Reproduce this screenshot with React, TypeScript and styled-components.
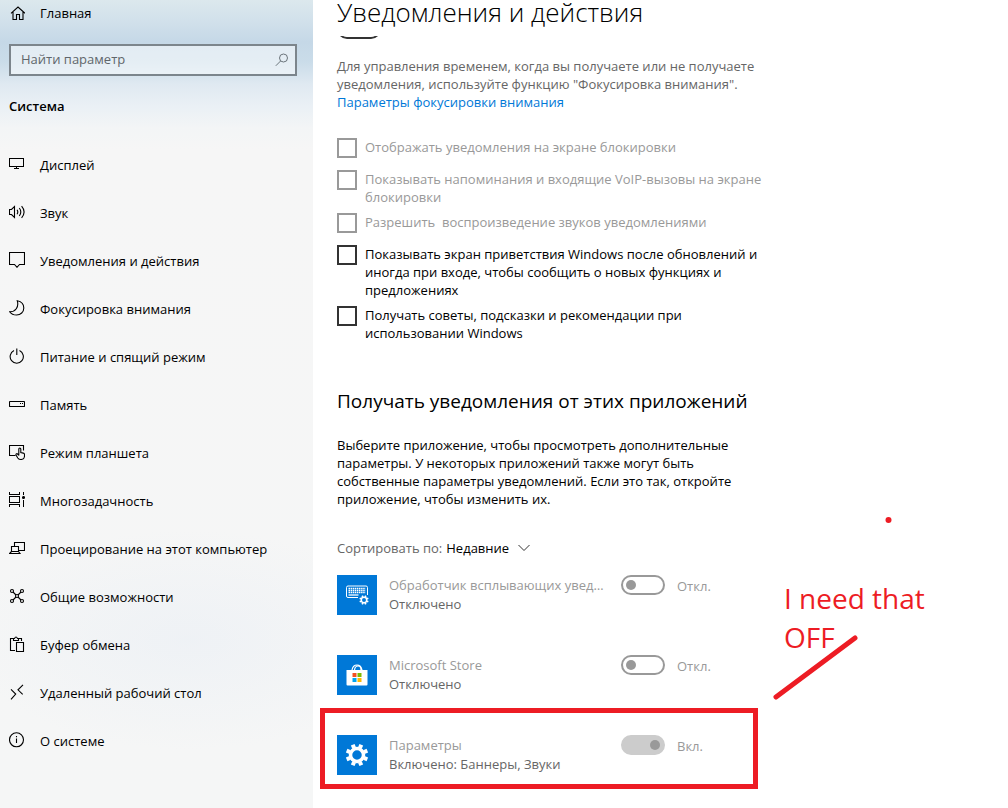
import React from 'react';
import styled, { createGlobalStyle } from 'styled-components';

const GlobalStyle = createGlobalStyle`
  *, *::before, *::after { box-sizing: border-box; }
  body {
    margin: 0;
    background: #fff;
    color: #000;
    font: 13px/18px "Open Sans", "Noto Sans", sans-serif;
  }
  h1, h2, p, ul { margin: 0; padding: 0; }
  ul { list-style: none; }
`;

const Page = styled.div`
  display: flex;
  min-height: 100vh;
`;

const Sidebar = styled.aside`
  flex: 0 0 313px;
  background:
    radial-gradient(ellipse 220px 110px at 60% 640px, rgba(228, 235, 244, 0.4), rgba(228, 235, 244, 0) 100%),
    linear-gradient(#dce8ed 0, #d2e1eb 20px, #c5d8e7 42px, #cadce9 62px, #dfe9f1 84px, #eaf0f5 106px, #f3f5f6 128px, #f6f6f6 150px, #f5f6f6 100%);
`;

const NavLink = styled.a`
  display: flex;
  align-items: center;
  gap: 15px;
  height: 48px;
  padding: 0 9px;
  color: #000;
  text-decoration: none;
  svg {
    flex: none;
    margin-bottom: 2px;
  }
`;

const HomeLink = styled(NavLink)`
  height: 26px;
`;

const SearchBox = styled.form`
  display: flex;
  align-items: center;
  height: 32px;
  margin: 18px 16px 0 9px;
  padding: 0 6px 0 10px;
  border: 2px solid #7c858c;
  background: rgba(255, 255, 255, 0.5);
`;

const SearchInput = styled.input`
  flex: 1;
  min-width: 0;
  padding: 0 0 2px;
  border: 0;
  outline: 0;
  background: transparent;
  font: inherit;
  color: #000;
  &::placeholder { color: #5f666b; opacity: 1; }
`;

const SectionTitle = styled.h2`
  padding: 0 9px;
  margin: 21px 0 26px;
  font-size: 13px;
  line-height: 18px;
  font-weight: 600;
`;

const Main = styled.main`
  position: relative;
  flex: 1;
  min-width: 0;
  padding: 0 24px;
`;

const PageTitle = styled.h1`
  font-size: 26px;
  line-height: 24px;
  font-weight: 300;
`;

const ScrollEdge = styled.div`
  display: flex;
  align-items: flex-end;
  height: 3px;
  margin-top: 12px;
  overflow: hidden;
`;

const Content = styled.div`
  max-width: 434px;
`;

const Hint = styled.p`
  margin-top: 18px;
  color: #666;
`;

const TextLink = styled.a`
  color: #0078d7;
  text-decoration: none;
`;

const Options = styled.ul`
  display: flex;
  flex-direction: column;
  gap: 7px;
  margin-top: 27px;
`;

const Option = styled.label<{ $off?: boolean }>`
  display: flex;
  align-items: flex-start;
  gap: 8px;
  min-height: 25px;
  white-space: pre-wrap;
  color: ${p => (p.$off ? '#999' : '#000')};
`;

const CheckBox = styled.input`
  appearance: none;
  flex: none;
  width: 20px;
  height: 20px;
  margin: 0;
  border: 2px solid #333;
  background: #fff;
  &:disabled { border-color: #999; }
`;

const GroupTitle = styled.h2`
  margin-top: 45px;
  font-size: 19px;
  line-height: 28px;
  font-weight: 400;
`;

const Paragraph = styled.p`
  max-width: 410px;
  margin-top: 21px;
`;

const SortRow = styled.div`
  display: flex;
  align-items: center;
  gap: 4px;
  margin: 31px 0 18px;
  color: #666;
`;

const SortSelect = styled.select`
  appearance: none;
  field-sizing: content;
  padding: 0;
  margin: 0 5px 0 0;
  border: 0;
  background: transparent;
  font: inherit;
  color: #000;
`;

const AppList = styled.ul`
  display: flex;
  flex-direction: column;
  gap: 40px;
`;

const AppRow = styled.li`
  position: relative;
  display: grid;
  grid-template-columns: 40px 220px 1fr;
  column-gap: 12px;
  height: 40px;
`;

const Tile = styled.div`
  display: grid;
  place-items: center;
  background: #0078d7;
`;

const AppText = styled.div`
  display: flex;
  flex-direction: column;
  gap: 1px;
  padding-top: 1px;
`;

const AppName = styled.div`
  overflow: hidden;
  white-space: nowrap;
  text-overflow: ellipsis;
  color: #999;
`;

const AppState = styled.div`
  color: #666;
`;

const ToggleLabel = styled.label`
  display: flex;
  align-items: flex-start;
  gap: 12px;
  color: #999;
`;

const ToggleText = styled.span`
  padding-top: 2px;
`;

const Toggle = styled.input`
  appearance: none;
  flex: none;
  width: 44px;
  height: 20px;
  margin: 0;
  padding: 3px;
  border: 2px solid #333;
  border-radius: 10px;
  display: flex;
  &::before {
    content: '';
    width: 10px;
    height: 10px;
    border-radius: 5px;
    background: #333;
  }
  &:disabled { border-color: #999; }
  &:disabled::before { background: #999; }
  &:checked { justify-content: flex-end; }
  &:checked:disabled { border-color: #ccc; background: #ccc; }
`;

const Highlight = styled.div`
  position: absolute;
  inset: -27px 13px -14px -17px;
  border: 5px solid #ed1c24;
  pointer-events: none;
`;

const Note = styled.p`
  position: absolute;
  left: 471px;
  top: 579px;
  color: #ed1c24;
  font: 28px/39px "Open Sans", sans-serif;
  white-space: pre-line;
`;

const Scribble = styled.svg`
  position: absolute;
  left: 457px;
  top: 510px;
  pointer-events: none;
`;

const icons: Record<string, React.ReactNode> = {
  home: <path d="M2 9.300 9 3l7 6.300M4 7.500v8h3.500v-5h3v5H14v-8" />,
  display: <path shapeRendering="crispEdges" d="M.5 2.500h14v8H.5zM7.500 10.500v2M5 12.500h5" />,
  sound: (
    <>
      <path d="M.5 5.500h2l3-3v11l-3-3h-2z" />
      <path d="M8 5.800q1.600 2.200 0 4.400M10.300 4q3 4 0 8M12.600 2.200q5 5.800 0 11.600" />
    </>
  ),
  message: <path d="M.5 .5h15v12h-5L8 15.300 5.500 12.500h-5z" />,
  moon: <path d="M8.300 .8c4 .8 6.500 3.500 6.500 7.200 0 4-3.200 7-7.200 7-3 0-5.500-1.200-7-3.300 5.800 .2 9.500-4.500 7.700-10.900z" />,
  power: <path d="M5 2.600a6.600 6.600 0 1 0 5.500 0M7.800 .5v6.500" />,
  storage: (
    <>
      <rect x=".5" y="5.500" width="15" height="5" rx=".5" />
      <path d="M11 7.500h1M13 7.500h1" />
    </>
  ),
  tablet: (
    <>
      <path d="M6.500 11.500h-6v-10h14v5" />
      <path d="M9.800 11.500V5q0-1 1-1t1 1v3.500l2.500 .6q1.200 .3 1.200 1.500V12q0 3.500-3.500 3.500-2.200 0-3.200-1.500L7 11q-.3-1 .6-1.300t2.200 1.800" />
    </>
  ),
  tasks: (
    <>
      <path shapeRendering="crispEdges" d="M0 2.500h11M.5 0v2.500M10.500 0v2.500M.5 4.500h10v6H.5zM0 12.500h11M.5 12.500V15M10.500 12.500V15M14.500 0v3M14.500 8v7" />
      <circle cx="14.500" cy="5.500" r="1" fill="currentColor" />
    </>
  ),
  project: <path d="M5.500 6V2.500h10v8H10M2.500 6.500h7v5h-7zM2.500 11.500l-2 2h10.500l-1.500-2" />,
  shared: (
    <>
      <circle cx="3" cy="3" r="1.500" /><circle cx="13" cy="3" r="1.500" />
      <circle cx="3" cy="13" r="1.500" /><circle cx="13" cy="13" r="1.500" />
      <circle cx="8" cy="8" r="1.500" />
      <path d="M4 4l3 3M12 4 9 7M4 12l3-3M12 12 9 9" />
    </>
  ),
  clipboard: (
    <>
      <path d="M6 14.500H1.500v-12H4M10 2.500h2.500V5M4.500 4.500v-2h1q1.500-3 3 0h1v2z" />
      <path d="M7.500 6.500h7v9h-7z" />
    </>
  ),
  remote: <path d="M2 5.300 6.700 10 2 15.300M14 .8 9 5.800l4.700 4.500" />,
  info: <><circle cx="7.500" cy="7.800" r="7" /><path d="M7.500 6.500V11M7.500 4v1.300" /></>,
};

const Icon = ({ name }: { name: string }) => (
  <svg width="16" height="16" viewBox="0 0 16 16" fill="none" stroke="currentColor" strokeWidth="1.100" aria-hidden="true">
    {icons[name]}
  </svg>
);

const Gear = ({ size, x, y }: { size: number; x?: number; y?: number }) => (
  <svg x={x} y={y} width={size} height={size} viewBox="0 0 24 24" fill="none" stroke="#fff" aria-hidden="true">
    <circle cx="12" cy="12" r="6.500" strokeWidth="3.500" />
    {[22.5, 67.5, 112.5, 157.5, 202.5, 247.5, 292.5, 337.5].map(a => (
      <path key={a} d="M12 4.500V.8" strokeWidth="4" transform={`rotate(${a} 12 12)`} />
    ))}
  </svg>
);

const KeyboardIcon = () => (
  <svg width="24" height="20" viewBox="0 0 24 20" fill="none" stroke="#fff" aria-hidden="true">
    <path d="M13 12.500H3q-1.500 0-1.500-1.500V2.500Q1.500 1 3 1h18q1.500 0 1.500 1.500V10" />
    <path d="M3.500 3.500h17M3.500 5.500h17M3.500 7.500h17" strokeWidth="1.300" strokeDasharray="1.500 .6" />
    <path d="M3.500 10h10" strokeWidth="1.300" />
    <Gear size={10} x={14} y={10} />
  </svg>
);

const StoreIcon = () => (
  <svg width="22" height="22" viewBox="0 0 22 22" aria-hidden="true">
    <path d="M6 6q1-5 5-5t5 5M8.500 6q.5-4 3.500-4t3 4" fill="none" stroke="#fff" strokeWidth="1.200" />
    <path d="M.5 6h21v14.500q0 1-1 1h-19q-1 0-1-1z" fill="#fff" />
    <path d="M6.500 9h4v4h-4z" fill="#f25022" />
    <path d="M11.500 9h4v4h-4z" fill="#7fba00" />
    <path d="M6.500 14h4v4h-4z" fill="#00a4ef" />
    <path d="M11.500 14h4v4h-4z" fill="#ffb900" />
  </svg>
);

const navItems = [
  ['display', 'Дисплей'],
  ['sound', 'Звук'],
  ['message', 'Уведомления и действия'],
  ['moon', 'Фокусировка внимания'],
  ['power', 'Питание и спящий режим'],
  ['storage', 'Память'],
  ['tablet', 'Режим планшета'],
  ['tasks', 'Многозадачность'],
  ['project', 'Проецирование на этот компьютер'],
  ['shared', 'Общие возможности'],
  ['clipboard', 'Буфер обмена'],
  ['remote', 'Удаленный рабочий стол'],
  ['info', 'О системе'],
];

const options = [
  { text: 'Отображать уведомления на экране блокировки', off: true },
  { text: 'Показывать напоминания и входящие VoIP-вызовы на экране блокировки', off: true },
  { text: 'Разрешить  воспроизведение звуков уведомлениями', off: true },
  { text: 'Показывать экран приветствия Windows после обновлений и иногда при входе, чтобы сообщить о новых функциях и предложениях' },
  { text: 'Получать советы, подсказки и рекомендации при использовании Windows' },
];

const apps = [
  { name: 'Обработчик всплывающих уведомлений', state: 'Отключено', on: false, icon: <KeyboardIcon /> },
  { name: 'Microsoft Store', state: 'Отключено', on: false, icon: <StoreIcon /> },
  { name: 'Параметры', state: 'Включено: Баннеры, Звуки', on: true, icon: <Gear size={24} /> },
];

export default function App() {
  return (
    <>
      <GlobalStyle />
      <Page>
        <Sidebar>
          <HomeLink href="#home"><Icon name="home" />Главная</HomeLink>
          <SearchBox role="search">
            <SearchInput type="text" placeholder="Найти параметр" aria-label="Найти параметр" />
            <svg width="14" height="14" viewBox="0 0 14 14" fill="none" stroke="#6b747b" aria-hidden="true">
              <circle cx="8.500" cy="5" r="4" />
              <path d="M5.600 8 .8 12.800" />
            </svg>
          </SearchBox>
          <SectionTitle>Система</SectionTitle>
          <nav>
            {navItems.map(([icon, label]) => (
              <NavLink key={icon} href={`#${icon}`}><Icon name={icon} />{label}</NavLink>
            ))}
          </nav>
        </Sidebar>
        <Main>
          <PageTitle>Уведомления и действия</PageTitle>
          <ScrollEdge>
            <Toggle type="checkbox" role="switch" aria-label="Уведомления" />
          </ScrollEdge>
          <Content>
            <Hint>
              Для управления временем, когда вы получаете или не получаете уведомления, используйте функцию "Фокусировка внимания".
              <br />
              <TextLink href="#focus">Параметры фокусировки внимания</TextLink>
            </Hint>
            <Options>
              {options.map(o => (
                <li key={o.text}>
                  <Option $off={o.off}>
                    <CheckBox type="checkbox" disabled={o.off} />
                    <span>{o.text}</span>
                  </Option>
                </li>
              ))}
            </Options>
            <GroupTitle>Получать уведомления от этих приложений</GroupTitle>
            <Paragraph>
              Выберите приложение, чтобы просмотреть дополнительные параметры. У некоторых приложений также могут быть собственные параметры уведомлений. Если это так, откройте приложение, чтобы изменить их.
            </Paragraph>
            <SortRow>
              <label htmlFor="sort">Сортировать по:</label>
              <SortSelect id="sort"><option>Недавние</option></SortSelect>
              <svg width="12" height="8" viewBox="0 0 12 8" fill="none" stroke="#333" aria-hidden="true">
                <path d="M.5 1 6 6.500 11.500 1" />
              </svg>
            </SortRow>
            <AppList>
              {apps.map(a => (
                <AppRow key={a.name}>
                  <Tile>{a.icon}</Tile>
                  <AppText>
                    <AppName>{a.name}</AppName>
                    <AppState>{a.state}</AppState>
                  </AppText>
                  <ToggleLabel>
                    <Toggle type="checkbox" role="switch" checked={a.on} disabled readOnly />
                    <ToggleText>{a.on ? 'Вкл.' : 'Откл.'}</ToggleText>
                  </ToggleLabel>
                  {a.on && <Highlight />}
                </AppRow>
              ))}
            </AppList>
          </Content>
          <Note>{'I need that\nOFF'}</Note>
          <Scribble width="130" height="194" viewBox="0 0 130 194" fill="#ed1c24" stroke="#ed1c24" aria-hidden="true">
            <circle cx="118.500" cy="10" r="3" stroke="none" />
            <path d="M6 187 85 128" strokeWidth="5" strokeLinecap="round" />
          </Scribble>
        </Main>
      </Page>
    </>
  );
}
